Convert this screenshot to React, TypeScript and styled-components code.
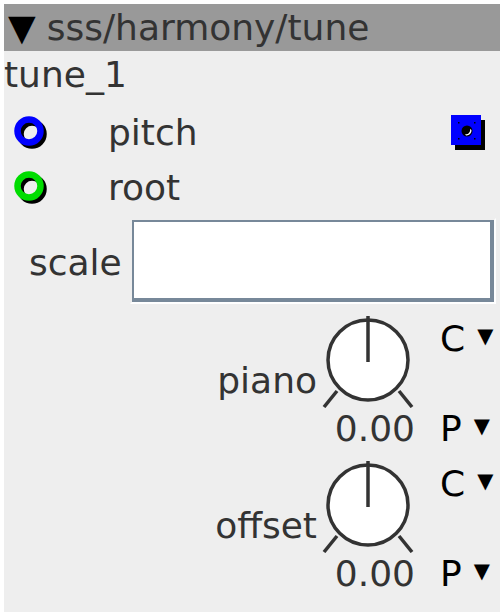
import React from "react"
import styled, { createGlobalStyle } from "styled-components"

const GlobalStyle = createGlobalStyle`
    html, body {
        margin: 0;
        padding: 0;
        background: #ffffff;
    }
    body {
        padding: 4px;
        font-family: "DejaVu Sans", Verdana, sans-serif;
        color: #333333;
    }
`

const Panel = styled.div`
    width: 496px;
    height: 608px;
    background: #eeeeee;
    display: flex;
    flex-direction: column;
    font-size: 36px;
`

const Header = styled.div`
    height: 47px;
    line-height: 47px;
    background: #999999;
    padding-left: 4px;
    white-space: nowrap;
`

const Arrow = styled.span`
    color: #000000;
    margin-right: 11px;
`

const Name = styled.div`
    height: 48px;
    line-height: 48px;
`

const PortRow = styled.div<{ $first?: boolean }>`
    display: grid;
    grid-template-columns: 95px 1fr auto;
    align-items: center;
    height: 55px;
    line-height: 55px;
    padding: 0 15px 0 9px;
    margin-top: ${({ $first }) => ($first ? 6 : 0)}px;
`

const ScaleRow = styled.div`
    display: flex;
    align-items: center;
    padding: 3px 4px 0 25px;
    height: 86px;
`

const ScaleLabel = styled.span`
    line-height: 42px;
    margin-top: 3px;
    margin-right: 8px;
`

const InputOuter = styled.div`
    flex: 1;
    height: 86px;
    box-sizing: border-box;
    border: 2px solid;
    border-color: transparent #ffffff #ffffff transparent;
`

const InputInner = styled.div`
    height: 100%;
    box-sizing: border-box;
    background: #ffffff;
    border-style: solid;
    border-color: #778899;
    border-width: 2px 4px 4px 2px;
`

const Knobs = styled.div`
    display: flex;
    flex-direction: column;
    gap: 7px;
    padding-top: 8px;
`

const KnobBlock = styled.div`
    display: grid;
    grid-template-columns: 1fr 96px 84px;
    align-items: center;
`

const KnobLabel = styled.div`
    text-align: right;
    padding-right: 3px;
    line-height: 42px;
`

const KnobColumn = styled.div`
    display: flex;
    flex-direction: column;
`

const KnobValue = styled.div`
    text-align: right;
    padding-right: 1px;
    line-height: 42px;
`

const Selects = styled.div`
    align-self: stretch;
    display: flex;
    flex-direction: column;
    justify-content: space-between;
    padding-left: 24px;
`

const Select = styled.div<{ $top?: boolean }>`
    color: #000000;
    line-height: 42px;
    margin-top: ${({ $top }) => ($top ? 3 : 0)}px;
    white-space: nowrap;
`

const Caret = styled.span`
    font-size: 21px;
    vertical-align: 8px;
    margin-left: 12px;
`

const Ring = ({ color }: { color: string }) => (
    <svg width="36" height="36" viewBox="0 0 36 36">
        <circle cx="19" cy="19" r="11.5" fill="none" stroke="#000" strokeWidth="6.5" />
        <circle cx="16" cy="16" r="11.5" fill="none" stroke={color} strokeWidth="6.5" />
    </svg>
)

const OutPort = () => (
    <svg width="34" height="36" viewBox="0 0 34 36">
        <rect x="4" y="5" width="30" height="30" fill="#000" />
        <rect x="0" y="0" width="30" height="30" fill="#0000ff" />
        <circle cx="16" cy="16" r="5.5" fill="#000" />
        <path d="M15 20.5 A5 5 0 0 0 20.5 15 L19 14 A4 4 0 0 1 14 19 Z" fill="#fff" />
        <rect x="7" y="7" width="1.5" height="1.5" fill="#000" />
        <rect x="23" y="7" width="1.5" height="1.5" fill="#000" />
        <rect x="7" y="23" width="1.5" height="1.5" fill="#000" />
        <rect x="23" y="23" width="1.5" height="1.5" fill="#000" />
    </svg>
)

const Dial = () => (
    <svg width="96" height="96" viewBox="0 0 96 96">
        <circle cx="48" cy="48" r="40" fill="#ffffff" stroke="#333" strokeWidth="3.5" />
        <line x1="48" y1="4" x2="48" y2="50" stroke="#333" strokeWidth="3.5" />
        <line x1="4" y1="95" x2="17" y2="79" stroke="#333" strokeWidth="3.5" />
        <line x1="92" y1="95" x2="79" y2="79" stroke="#333" strokeWidth="3.5" />
    </svg>
)

const Knob = ({ label, value }: { label: string; value: string }) => (
    <KnobBlock>
        <KnobLabel>{label}</KnobLabel>
        <KnobColumn>
            <Dial />
            <KnobValue>{value}</KnobValue>
        </KnobColumn>
        <Selects>
            <Select $top>
                C<Caret>▼</Caret>
            </Select>
            <Select>
                P<Caret>▼</Caret>
            </Select>
        </Selects>
    </KnobBlock>
)

const App = () => {
    return (
        <>
            <GlobalStyle />
            <Panel>
                <Header>
                    <Arrow>▼</Arrow>sss/harmony/tune
                </Header>
                <Name>tune_1</Name>
                <PortRow $first>
                    <Ring color="#0000ff" />
                    <span>pitch</span>
                    <OutPort />
                </PortRow>
                <PortRow>
                    <Ring color="#00dd00" />
                    <span>root</span>
                    <span />
                </PortRow>
                <ScaleRow>
                    <ScaleLabel>scale</ScaleLabel>
                    <InputOuter>
                        <InputInner />
                    </InputOuter>
                </ScaleRow>
                <Knobs>
                    <Knob label="piano" value="0.00" />
                    <Knob label="offset" value="0.00" />
                </Knobs>
            </Panel>
        </>
    )
}

export default App
